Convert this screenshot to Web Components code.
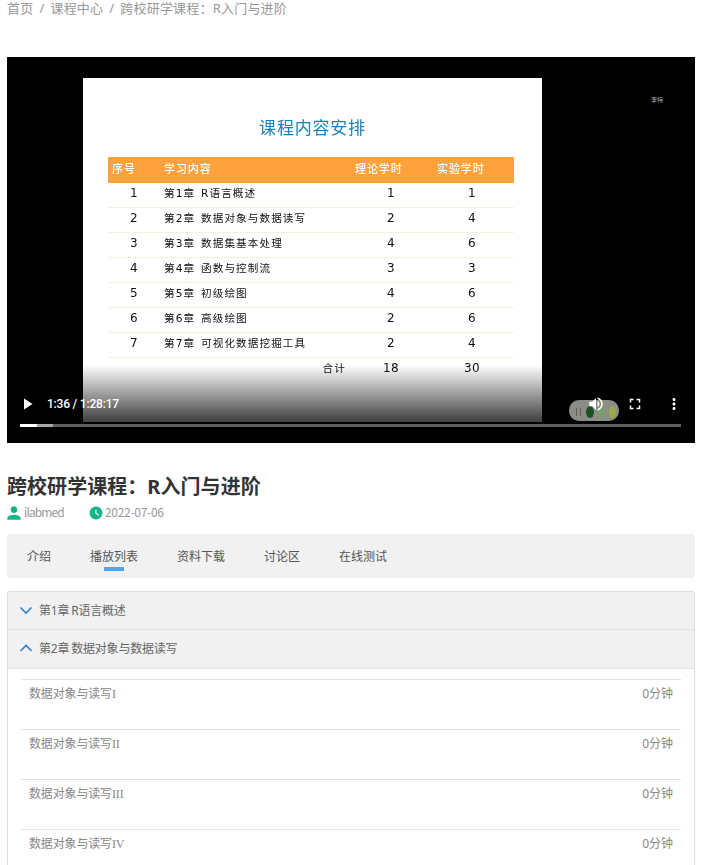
<!DOCTYPE html>
<html lang="zh">
<head>
<meta charset="utf-8">
<title>跨校研学课程</title>
<style>
html{overflow:hidden;height:865px;}
body{margin:0;padding:0 12px 0 7px;height:865px;overflow:hidden;background:#fff;color:#333;
    font-family:"Noto Sans","Noto Sans CJK SC",sans-serif;}
</style>
</head>
<body>
<bread-crumb><span>首页</span><span>课程中心</span><span>跨校研学课程：R入门与进阶</span></bread-crumb>
<video-player current="1:36" total="1:28:17"><course-slide></course-slide></video-player>
<course-head author="ilabmed" date="2022-07-06">跨校研学课程：R入门与进阶</course-head>
<tab-bar active="1"><span>介绍</span><span>播放列表</span><span>资料下载</span><span>讨论区</span><span>在线测试</span></tab-bar>
<chapter-list>
    <course-chapter name="第1章 R语言概述"></course-chapter>
    <course-chapter name="第2章 数据对象与数据读写" open>
        <course-lesson time="0分钟">数据对象与读写I</course-lesson>
        <course-lesson time="0分钟">数据对象与读写II</course-lesson>
        <course-lesson time="0分钟">数据对象与读写III</course-lesson>
        <course-lesson time="0分钟">数据对象与读写IV</course-lesson>
    </course-chapter>
</chapter-list>

<script>
class BreadCrumb extends HTMLElement{
    constructor(){
        super();
        this.attachShadow({mode: 'open'});
        this.shadowRoot.innerHTML = `
            <style>
                :host{display:block;height:17px;margin-bottom:40px;font-size:13px;line-height:17px;color:#999;letter-spacing:.2px;}
                .sep{margin:0 6px;}
            </style>
            <div></div>`;
    }
    connectedCallback(){
        const box = this.shadowRoot.querySelector('div');
        box.innerHTML = [...this.children].map(c => c.textContent).join('<span class="sep">/</span>');
    }
}

class CourseSlide extends HTMLElement{
    constructor(){
        super();
        this.attachShadow({mode: 'open'});
        const rows = [
            ['1','第1章','R语言概述','1','1'],
            ['2','第2章','数据对象与数据读写','2','4'],
            ['3','第3章','数据集基本处理','4','6'],
            ['4','第4章','函数与控制流','3','3'],
            ['5','第5章','初级绘图','4','6'],
            ['6','第6章','高级绘图','2','6'],
            ['7','第7章','可视化数据挖掘工具','2','4']
        ];
        this.shadowRoot.innerHTML = `
            <style>
                :host{display:block;width:459px;height:344px;background:#fff;color:#111;
                    font-family:"DejaVu Sans","Noto Sans CJK SC",sans-serif;font-size:10.6px;letter-spacing:1.1px;filter:blur(.35px);}
                h2{margin:0;height:79px;box-sizing:border-box;padding-top:36px;text-align:center;font-weight:400;
                    font-family:"Noto Sans CJK SC",sans-serif;
                    font-size:17px;line-height:26px;letter-spacing:.8px;color:#1b80ba;}
                .table{margin-left:25px;width:406px;}
                .row{display:grid;grid-template-columns:56px 191px 82px 77px;height:25px;line-height:20px;
                    box-sizing:border-box;border-bottom:1px solid #f6f0dc;}
                .row.head{background:#ffa13d;color:#fff;height:26px;border:0;line-height:22px;font-size:11px;letter-spacing:.9px;font-weight:500;
                    font-family:"Noto Sans CJK SC",sans-serif;}
                .row.head span:first-child{text-align:left;width:auto;padding-left:4px;font-size:11px;letter-spacing:.9px;line-height:22px;}
                .row.last{border:0;}
                .num,.c3,.c4{text-align:center;font-size:12px;letter-spacing:.3px;line-height:21px;}
                .num{width:52px;}
                .c3{width:72px;}
                .c4{width:70px;}
                .sum{text-align:right;padding-right:9px;}
                .ch{display:inline-block;width:37px;}
            </style>
            <h2>课程内容安排</h2>
            <div class="table">
                <div class="row head"><span class="num">序号</span><span>学习内容</span><span>理论学时</span><span>实验学时</span></div>
                ${rows.map(r => `<div class="row"><span class="num">${r[0]}</span><span><span class="ch">${r[1]}</span>${r[2]}</span><span class="c3">${r[3]}</span><span class="c4">${r[4]}</span></div>`).join('')}
                <div class="row last"><span></span><span class="sum">合计</span><span class="c3">18</span><span class="c4">30</span></div>
            </div>`;
    }
}

class VideoPlayer extends HTMLElement{
    constructor(){
        super();
        this.attachShadow({mode: 'open'});
        this.shadowRoot.innerHTML = `
            <style>
                :host{display:block;position:relative;height:386px;background:#000;box-sizing:border-box;
                    padding:21px 0 0 76px;overflow:hidden;}
                .mark{position:absolute;left:644px;top:39px;font-size:6px;line-height:8px;color:#aaa;
                    font-family:"Noto Sans CJK SC",sans-serif;}
                .shade{position:absolute;left:0;right:0;bottom:0;height:78px;
                    background:linear-gradient(rgba(0,0,0,0),rgba(0,0,0,.72) 70%,rgba(0,0,0,.8));}
                .thumb{position:absolute;left:562px;top:343px;width:50px;height:21px;border-radius:10px;background:#8d8d88;
                    display:flex;align-items:center;box-sizing:border-box;padding:3px 0 0 7px;}
                .thumb s{display:block;width:3px;height:8px;background:#5a5f58;margin-right:3px;filter:blur(.6px);}
                .thumb i{display:block;width:8px;height:12px;border-radius:50%;margin-right:3px;flex:none;filter:blur(.4px);}
                .bar{position:absolute;left:13px;right:12px;top:336px;height:22px;display:flex;align-items:center;color:#fff;}
                .time{margin-left:13px;font:500 12px/22px Roboto,sans-serif;flex:1;letter-spacing:-.2px;}
                .bar svg{display:block;fill:#fff;}
                .track{position:absolute;left:13px;right:14px;top:367px;height:3px;background:#5f5f5f;}
                .track b{position:absolute;left:0;top:0;height:3px;width:33px;background:#a8a8a8;}
                .track u{position:absolute;left:0;top:0;height:3px;width:17px;background:#fff;}
            </style>
            <slot></slot>
            <div class="mark">李特</div>
            <div class="shade"></div>
            <div class="thumb"><s></s><s style="margin-right:5px"></s><i style="background:#1c4f25"></i><i style="background:#7f9c6e;margin-right:4px"></i><i style="background:#9aa945;width:7px"></i></div>
            <div class="bar">
                <svg width="14" height="14" viewBox="0 0 14 14"><path d="M4 1.500v11l8.500-5.500z"/></svg>
                <span class="time"></span>
                <svg width="18" height="18" viewBox="0 0 24 24"><path d="M3 9v6h4l5 5V4L7 9H3zm13.500 3c0-1.770-1.020-3.290-2.500-4.030v8.050c1.480-.73 2.500-2.250 2.500-4.020zM14 3.230v2.060c2.890.86 5 3.540 5 6.710s-2.110 5.850-5 6.710v2.060c4.010-.91 7-4.490 7-8.770s-2.990-7.860-7-8.770z"/></svg>
                <svg style="margin-left:21px" width="18" height="18" viewBox="0 0 24 24"><path d="M7 14H5v5h5v-2H7v-3zm-2-4h2V7h3V5H5v5zm12 7h-3v2h5v-5h-2v3zM14 5v2h3v3h2V5h-5z"/></svg>
                <svg style="margin-left:21px" width="18" height="18" viewBox="0 0 24 24"><path d="M12 8c1.100 0 2-.9 2-2s-.9-2-2-2-2 .9-2 2 .9 2 2 2zm0 2c-1.100 0-2 .9-2 2s.9 2 2 2 2-.9 2-2-.9-2-2-2zm0 6c-1.100 0-2 .9-2 2s.9 2 2 2 2-.9 2-2-.9-2-2-2z"/></svg>
            </div>
            <div class="track"><b></b><u></u></div>`;
    }
    connectedCallback(){
        this.shadowRoot.querySelector('.time').textContent = this.getAttribute('current') + ' / ' + this.getAttribute('total');
    }
}

class CourseHead extends HTMLElement{
    constructor(){
        super();
        this.attachShadow({mode: 'open'});
        this.shadowRoot.innerHTML = `
            <style>
                :host{display:block;padding-top:31px;}
                h1{margin:0;font-size:20px;line-height:26px;font-weight:700;color:#333;letter-spacing:.05px;font-family:"Noto Sans","Noto Sans CJK SC",sans-serif;}
                .meta{display:flex;align-items:center;height:18px;margin-top:3px;font-size:12px;color:#999;font-family:"Noto Sans CJK SC",sans-serif;letter-spacing:-.3px;}
                .meta svg{display:block;fill:#14b489;flex:none;}
                .meta span{padding-bottom:2px;}
                .author{width:65px;letter-spacing:-.9px;}
                .date{margin-left:2px;}
            </style>
            <h1><slot></slot></h1>
            <div class="meta">
                <svg style="margin:2px 0 0 -3px" width="20" height="20" viewBox="0 0 24 24"><path d="M12 12c2.210 0 4-1.790 4-4s-1.790-4-4-4-4 1.790-4 4 1.790 4 4 4zm0 2c-2.670 0-8 1.340-8 4v2h16v-2c0-2.660-5.330-4-8-4z"/></svg>
                <span class="author"></span>
                <svg style="margin-top:1px" width="14" height="14" viewBox="0 0 24 24"><path d="M12 1C5.900 1 1 5.900 1 12s4.900 11 11 11 11-4.900 11-11S18.100 1 12 1zm4.400 15.900L10.800 13V6.500h2v5.400l4.700 3.200-1.100 1.800z"/></svg>
                <span class="date"></span>
            </div>`;
    }
    connectedCallback(){
        this.shadowRoot.querySelector('.author').textContent = this.getAttribute('author');
        this.shadowRoot.querySelector('.date').textContent = this.getAttribute('date');
    }
}

class TabBar extends HTMLElement{
    constructor(){
        super();
        this.attachShadow({mode: 'open'});
        this.shadowRoot.innerHTML = `
            <style>
                :host{display:flex;gap:39px;height:44px;margin-top:13px;padding-left:20px;background:#f1f1f1;border-radius:4px;
                    font-size:12px;line-height:46px;color:#555;}
                .tab{position:relative;}
                .tab.on::after{content:"";position:absolute;left:50%;margin-left:-10px;top:33px;width:20px;height:4px;background:#4ea4ee;}
            </style>`;
    }
    connectedCallback(){
        const active = Number(this.getAttribute('active'));
        [...this.children].forEach((c, i) => {
            const tab = document.createElement('div');
            tab.className = i === active ? 'tab on' : 'tab';
            tab.textContent = c.textContent;
            this.shadowRoot.appendChild(tab);
        });
    }
}

class ChapterList extends HTMLElement{
    constructor(){
        super();
        this.attachShadow({mode: 'open'});
        this.shadowRoot.innerHTML = `
            <style>
                :host{display:block;margin-top:13px;border:1px solid #ddd;border-bottom:0;border-radius:3px 3px 0 0;}
            </style>
            <slot></slot>`;
    }
}

class CourseChapter extends HTMLElement{
    constructor(){
        super();
        this.attachShadow({mode: 'open'});
        this.shadowRoot.innerHTML = `
            <style>
                :host{display:block;}
                .head{display:flex;align-items:center;height:38px;box-sizing:border-box;padding:0 0 2px 11px;background:#f1f1f1;
                    border-bottom:1px solid #e2e2e2;font-size:12px;color:#666;letter-spacing:-.2px;word-spacing:-1px;}
                :host([open]) .head{height:39px;}
                svg{display:block;margin-right:6px;fill:none;stroke:#2f7fd6;stroke-width:1.600;}
                .list{padding:10px 13px 0;}
            </style>
            <div class="head"><svg width="14" height="14" viewBox="0 0 14 14"><path></path></svg><span></span></div>
            <div class="list"><slot></slot></div>`;
    }
    connectedCallback(){
        const open = this.hasAttribute('open');
        this.shadowRoot.querySelector('span').textContent = this.getAttribute('name');
        this.shadowRoot.querySelector('path').setAttribute('d', open ? 'M1.500 10L7 4.500 12.500 10' : 'M1.500 4.500L7 10 12.500 4.500');
        if(!open) this.shadowRoot.querySelector('.list').style.display = 'none';
    }
}

class CourseLesson extends HTMLElement{
    constructor(){
        super();
        this.attachShadow({mode: 'open'});
        this.shadowRoot.innerHTML = `
            <style>
                :host{display:flex;justify-content:space-between;height:50px;box-sizing:border-box;border-top:1px solid #e2e2e2;
                    padding:5px 8px 0;font-size:12px;line-height:18px;color:#888;}
                .name{font-family:"Liberation Serif","Noto Sans CJK SC",serif;letter-spacing:-.15px;}
            </style>
            <div class="name"><slot></slot></div><div class="time"></div>`;
    }
    connectedCallback(){
        this.shadowRoot.querySelector('.time').textContent = this.getAttribute('time');
    }
}

customElements.define("bread-crumb", BreadCrumb);
customElements.define("course-slide", CourseSlide);
customElements.define("video-player", VideoPlayer);
customElements.define("course-head", CourseHead);
customElements.define("tab-bar", TabBar);
customElements.define("chapter-list", ChapterList);
customElements.define("course-chapter", CourseChapter);
customElements.define("course-lesson", CourseLesson);
</script>
</body>
</html>
